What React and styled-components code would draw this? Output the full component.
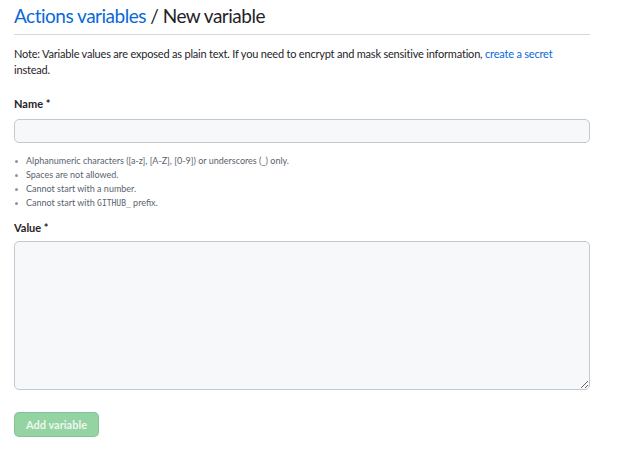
import React from "react";
import styled, { createGlobalStyle } from "styled-components";

const GlobalStyle = createGlobalStyle`
  *, *::before, *::after {
    box-sizing: border-box;
    margin: 0;
    padding: 0;
  }
  body {
    background: #ffffff;
    font-family: Lato, "Liberation Sans", sans-serif;
    color: #1f2328;
  }
`;

const Page = styled.div`
  width: 617px;
  height: 450px;
  padding: 2px 27px 0 14px;
`;

const Header = styled.h1`
  font-size: 19px;
  font-weight: 400;
  letter-spacing: -0.5px;
  line-height: 28px;
  padding-bottom: 4px;
  border-bottom: 1px solid #d0d7de;
  color: #1f2328;
`;

const Crumb = styled.a`
  color: #0969da;
  text-decoration: none;
`;

const Note = styled.p`
  margin-top: 11px;
  font-size: 11px;
  letter-spacing: -0.2px;
  line-height: 16px;
`;

const Link = styled.a`
  color: #0969da;
  text-decoration: none;
`;

const Field = styled.div`
  margin-top: ${p => p.$top}px;
  display: flex;
  flex-direction: column;
`;

const Label = styled.label`
  font-size: 11px;
  font-weight: 700;
  line-height: 16px;
  margin-bottom: ${p => p.$gap}px;
`;

const Input = styled.input`
  width: 100%;
  height: 24px;
  background: #f6f8fa;
  border: 1px solid #c4c9cf;
  border-radius: 5px;
  outline: none;
`;

const TextArea = styled.textarea`
  width: 100%;
  height: 149px;
  background: #f6f8fa;
  border: 1px solid #c4c9cf;
  border-radius: 5px;
  outline: none;
  resize: vertical;
  display: block;
`;

const Rules = styled.ul`
  margin-top: 11px;
  padding-left: 12px;
  list-style: none;
`;

const Rule = styled.li`
  position: relative;
  font-size: 9px;
  line-height: 14px;
  color: #59636e;

  &::before {
    content: "";
    position: absolute;
    left: -11px;
    top: 6px;
    width: 3px;
    height: 3px;
    border-radius: 50%;
    background: #8c959f;
  }
`;

const Code = styled.code`
  font-family: "DejaVu Sans Mono", "Liberation Mono", monospace;
  font-size: 8px;
`;

const Button = styled.button`
  margin-top: 22px;
  height: 25px;
  padding: 0 11px;
  font-family: Lato, "Liberation Sans", sans-serif;
  font-size: 11px;
  font-weight: 700;
  color: rgba(255, 255, 255, 0.85);
  background: #94d3a2;
  border: 1px solid rgba(31, 35, 40, 0.1);
  border-radius: 5px;
`;

export default function App() {
  return (
    <Page>
      <GlobalStyle />
      <Header>
        <Crumb href="#">Actions variables</Crumb> / New variable
      </Header>
      <Note>
        Note: Variable values are exposed as plain text. If you need to encrypt and mask sensitive information,{" "}
        <Link href="#">create a secret</Link> instead.
      </Note>
      <Field $top={18}>
        <Label $gap={7}>Name *</Label>
        <Input type="text" />
      </Field>
      <Rules>
        <Rule>Alphanumeric characters ([a-z], [A-Z], [0-9]) or underscores (_) only.</Rule>
        <Rule>Spaces are not allowed.</Rule>
        <Rule>Cannot start with a number.</Rule>
        <Rule>Cannot start with <Code>GITHUB_</Code> prefix.</Rule>
      </Rules>
      <Field $top={9}>
        <Label $gap={5}>Value *</Label>
        <TextArea />
      </Field>
      <Button disabled>Add variable</Button>
    </Page>
  );
}
